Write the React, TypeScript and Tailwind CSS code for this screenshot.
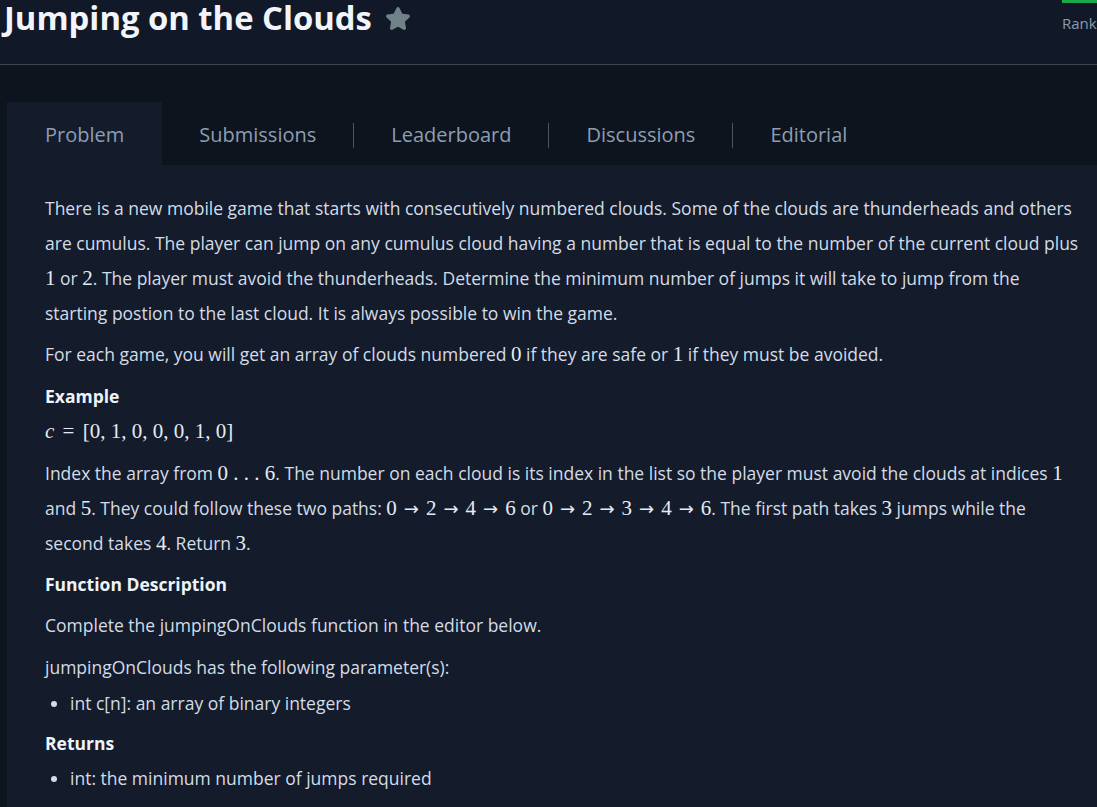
import { Star } from "lucide-react";

const tabs = ["Problem", "Submissions", "Leaderboard", "Discussions", "Editorial"];

function M({ children }: { children: React.ReactNode }) {
  return (
    <span className="font-['Liberation_Serif',serif] text-[21px] leading-none text-[#e4ebf2]">{children}</span>
  );
}

function Arrow() {
  return <span className="mx-[7px] font-['DejaVu_Sans',sans-serif] text-[18px] leading-none">→</span>;
}

function Path({ nums }: { nums: number[] }) {
  return (
    <M>
      {nums.map((n, i) => (
        <span key={i}>
          {i > 0 && <Arrow />}
          {n}
        </span>
      ))}
    </M>
  );
}

export default function App() {
  return (
    <div className="min-h-[807px] bg-[#0e141e] font-['Open_Sans',sans-serif] overflow-hidden">
      {/* Header */}
      <header className="h-[65px] bg-[#111827] border-b border-[#3f434b] flex justify-between">
        <div className="flex items-start gap-[13px] pl-[4px]">
          <h1 className="text-[32.8px] font-bold leading-[36px] text-[#f1f5f9]">Jumping on the Clouds</h1>
          <Star size={26} className="mt-[6px]" fill="#708288" stroke="#708288" />
        </div>
        <div className="w-[35px] flex flex-col">
          <div className="h-[3px] bg-[#1ba94c]" />
          <span className="mt-[9px] text-[15px] text-[#8a9bb0] whitespace-nowrap">Rank</span>
        </div>
      </header>

      {/* Tabs */}
      <div className="pt-[37px] pl-[7px]">
        <div className="flex h-[63px] items-center">
          {tabs.map((t, i) => (
            <div
              key={t}
              className={
                i === 0
                  ? "h-full flex items-center pt-[3px] px-[38px] bg-[#141b2b] text-[20px] text-[#8c9eb3]"
                  : "h-full flex items-center pt-[3px] text-[20px] text-[#8c9eb3]"
              }
            >
              <span className={i === 0 ? "" : "px-[37px]"}>{t}</span>
              {i > 0 && i < tabs.length - 1 && <span className="w-px h-[25px] bg-[#4a5463]" />}
            </div>
          ))}
        </div>

        {/* Content */}
        <div className="bg-[#141b2b] pl-[38px] pr-[18px] pt-[26px] pb-10 text-[17.5px] leading-[35px] text-[#d3dce7]">
          <p>
            There is a new mobile game that starts with consecutively numbered clouds. Some of the clouds are
            thunderheads and others are cumulus. The player can jump on any cumulus cloud having a number that is
            equal to the number of the current cloud plus <M>1</M> or <M>2</M>. The player must avoid the
            thunderheads. Determine the minimum number of jumps it will take to jump from the starting postion to
            the last cloud. It is always possible to win the game.
          </p>
          <p className="mt-[6px]">
            For each game, you will get an array of clouds numbered <M>0</M> if they are safe or <M>1</M> if they
            must be avoided.
          </p>
          <p className="mt-[7px] font-bold text-[#eef3f8]">Example</p>
          <p className="leading-[34px]">
            <M>
              <i>c</i> <span className="mx-[3px]">=</span> [0, 1, 0, 0, 0, 1, 0]
            </M>
          </p>
          <p className="mt-[8px]">
            Index the array from <M>0 . . . 6</M>. The number on each cloud is its index in the list so the player
            must avoid the clouds at indices <M>1</M> and <M>5</M>. They could follow these two paths:{" "}
            <Path nums={[0, 2, 4, 6]} /> or <Path nums={[0, 2, 3, 4, 6]} />. The first path takes <M>3</M> jumps
            while the second takes <M>4</M>. Return <M>3</M>.
          </p>
          <p className="mt-[6px] font-bold text-[#eef3f8]">Function Description</p>
          <p className="mt-[6px]">Complete the jumpingOnClouds function in the editor below.</p>
          <p className="mt-[7px]">jumpingOnClouds has the following parameter(s):</p>
          <ul className="list-disc pl-[25px] leading-[36px]">
            <li>int c[n]: an array of binary integers</li>
          </ul>
          <p className="mt-[5px] font-bold text-[#eef3f8]">Returns</p>
          <ul className="list-disc pl-[25px]">
            <li>int: the minimum number of jumps required</li>
          </ul>
        </div>
      </div>
    </div>
  );
}
